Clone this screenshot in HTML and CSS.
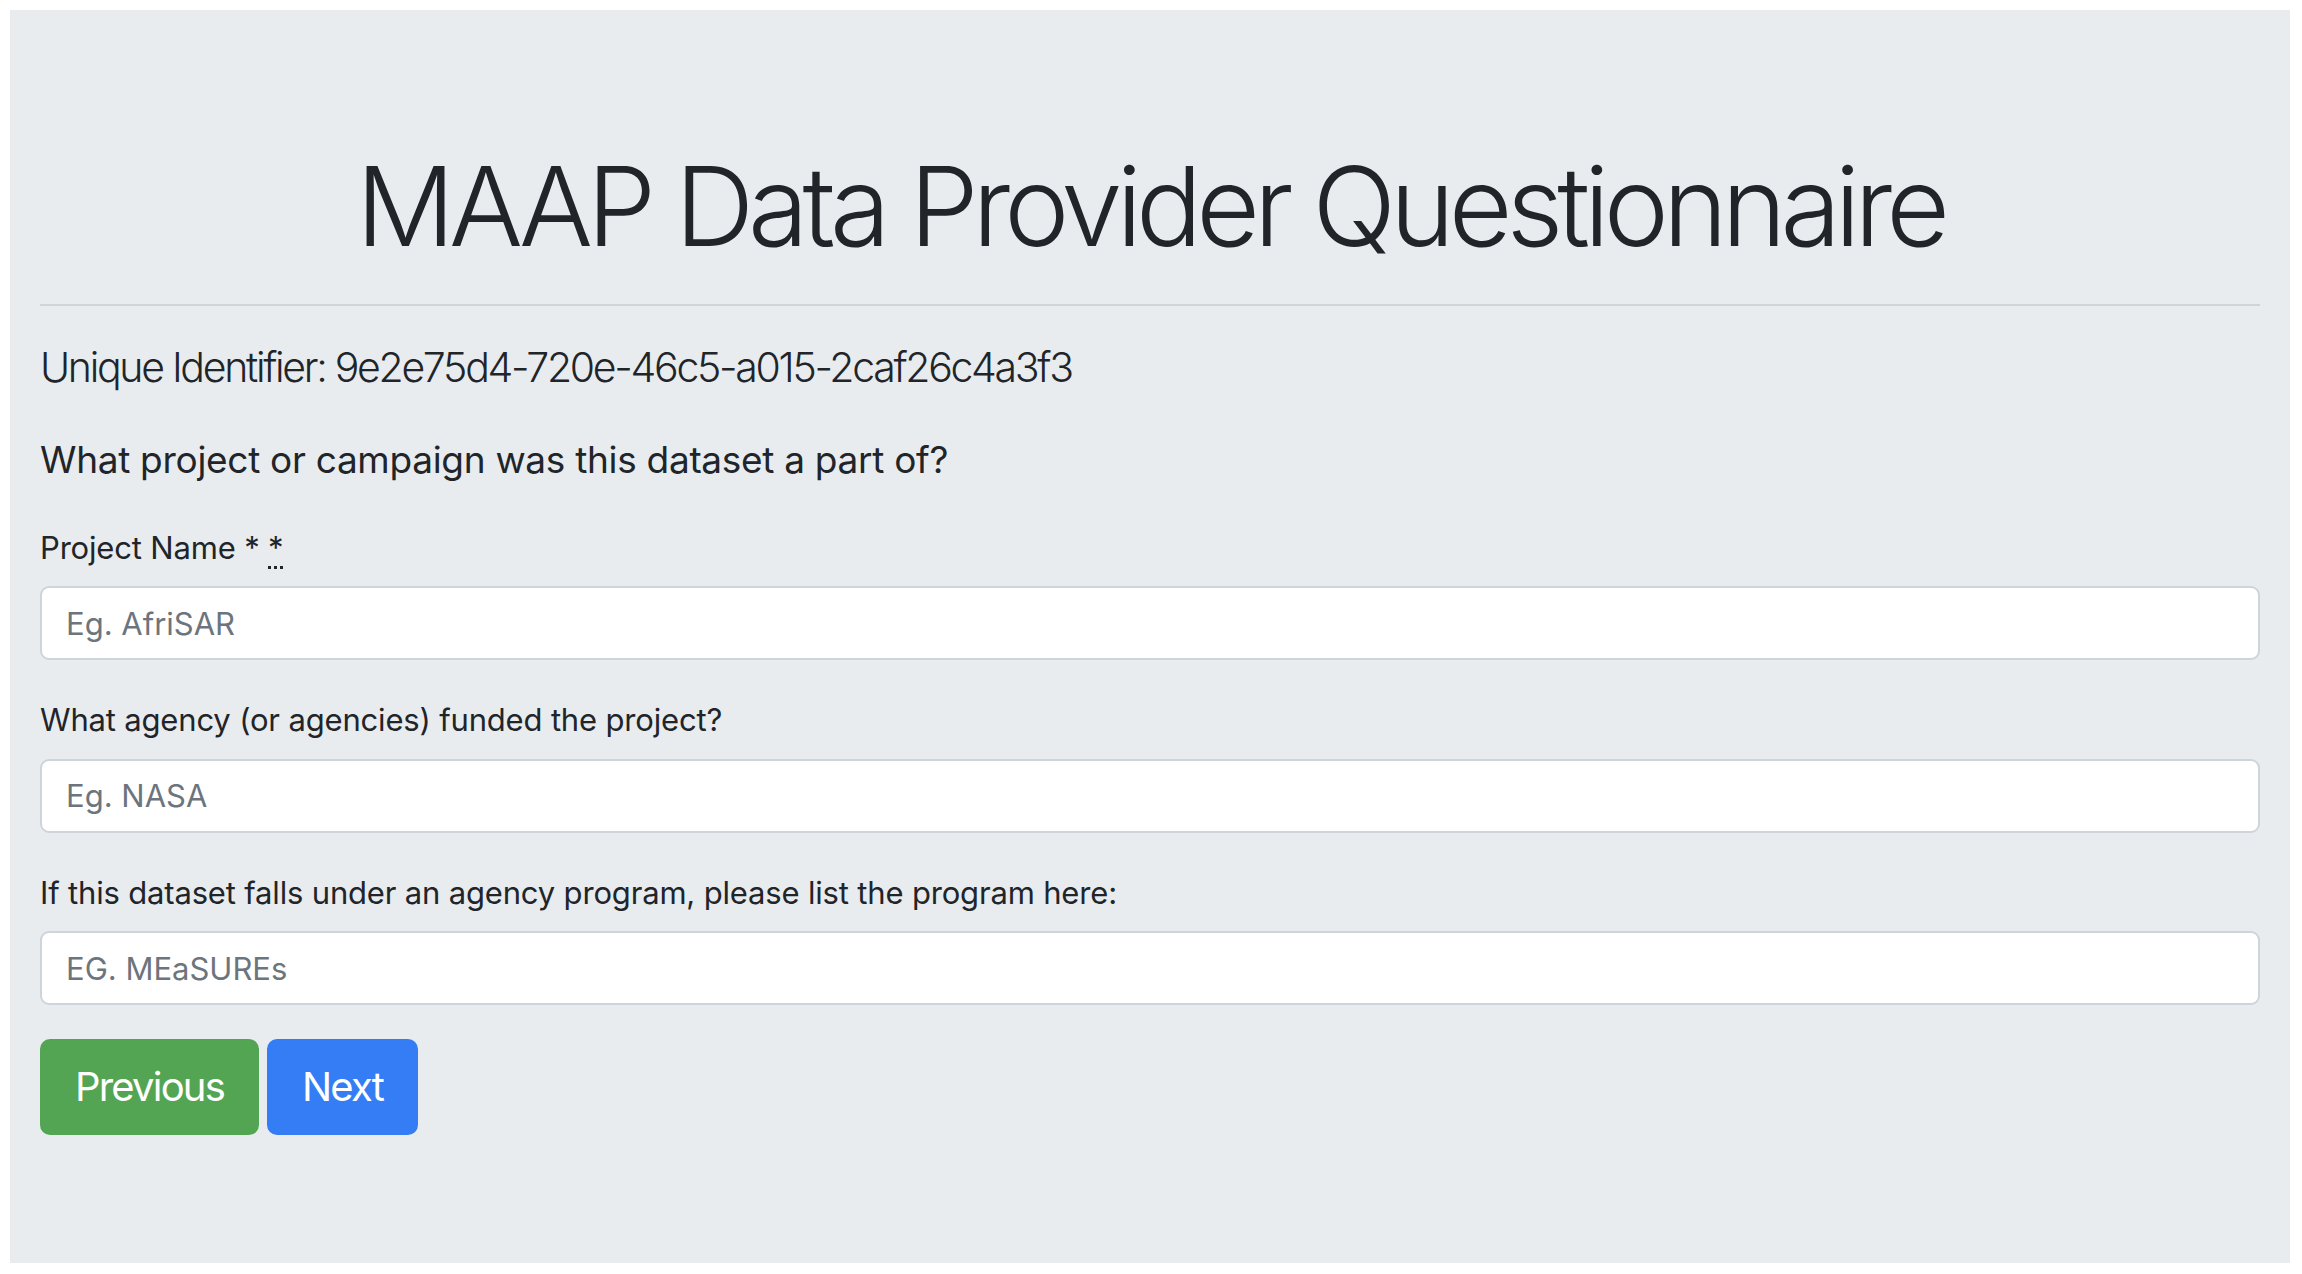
FILE: index.html
```html
<!DOCTYPE html>
<html lang="en">
<head>
<meta charset="utf-8">
<title>MAAP Data Provider Questionnaire</title>
<link rel="stylesheet" href="styles.css">
</head>
<body>
<div class="jumbotron">
  <h1 class="title">MAAP Data Provider Questionnaire</h1>
  <hr class="divider">
  <p class="lead">Unique Identifier: 9e2e75d4-720e-46c5-a015-2caf26c4a3f3</p>
  <h5 class="question">What project or campaign was this dataset a part of?</h5>
  <form class="form">
    <div class="form-group">
      <label class="label" for="project">Project Name * <abbr class="req" title="required">*</abbr></label>
      <input class="input" id="project" type="text" placeholder="Eg. AfriSAR">
    </div>
    <div class="form-group">
      <label class="label" for="agency">What agency (or agencies) funded the project?</label>
      <input class="input" id="agency" type="text" placeholder="Eg. NASA">
    </div>
    <div class="form-group form-group-last">
      <label class="label" for="program">If this dataset falls under an agency program, please list the program here:</label>
      <input class="input" id="program" type="text" placeholder="EG. MEaSUREs">
    </div>
    <div class="actions">
      <button type="button" class="btn btn-green">Previous</button>
      <button type="button" class="btn btn-blue">Next</button>
    </div>
  </form>
</div>
</body>
</html>
```

FILE: styles.css
```css
* { box-sizing: border-box; }
html, body { background: #ffffff; }
body {
  margin: 10px 12px 12px 10px;
  font-family: Inter, "Noto Sans", "Liberation Sans", sans-serif;
  color: #212529;
}
.jumbotron {
  background: #e9ecef;
  padding: 130px 30px 128px 30px;
  min-height: 1252px;
}
.title {
  margin: 0;
  font-size: 110px;
  font-weight: 300;
  line-height: 1.2;
  text-align: center;
  letter-spacing: -6px;
}
.divider {
  margin: 32px 0 0 0;
  border: 0;
  border-top: 2px solid rgba(0,0,0,0.1);
  height: 0;
}
.lead {
  margin: 31px 0 0 0;
  font-size: 41px;
  font-weight: 300;
  line-height: 1.5;
  letter-spacing: -2.3px;
}
.question {
  margin: 39px 0 0 0;
  font-size: 37px;
  font-weight: 400;
  line-height: 1.2;
  letter-spacing: -0.3px;
}
.form { margin-top: 43px; }
.form-group { margin-bottom: 37px; }
.form-group-last { margin-bottom: 34px; }
.label {
  display: block;
  font-size: 31px;
  line-height: 1.5;
  margin-bottom: 15px;
  letter-spacing: -0.17px;
}
.req {
  text-decoration: underline dotted;
  text-decoration-thickness: 3px;
  text-underline-offset: 7px;
  cursor: help;
}
.input {
  display: block;
  width: 100%;
  height: 74px;
  padding: 8px 24px;
  font-family: inherit;
  font-size: 31px;
  color: #495057;
  background: #ffffff;
  border: 2px solid #ced4da;
  border-radius: 9px;
  outline: none;
}
.input::placeholder { color: #6c757d; opacity: 1; }
.actions {
  display: flex;
  gap: 8px;
}
.btn {
  font-family: inherit;
  font-size: 40px;
  line-height: 1.5;
  padding: 16px 33px;
  height: 96px;
  border: 2px solid transparent;
  border-radius: 10px;
  color: #ffffff;
  letter-spacing: -1.8px;
  cursor: pointer;
}
.btn-green { background: #53a553; border-color: #53a553; }
.btn-blue { background: #347df5; border-color: #347df5; }
```
